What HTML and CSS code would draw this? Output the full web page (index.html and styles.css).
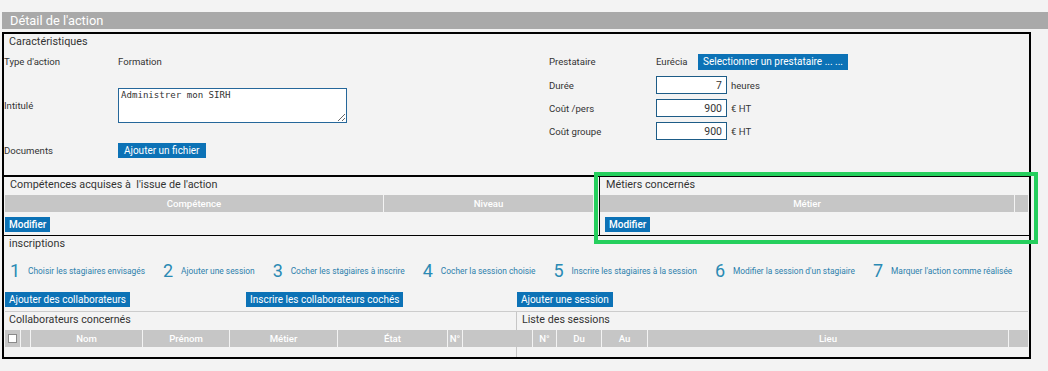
FILE: index.html
```html
<!DOCTYPE html>
<html lang="fr">
<head>
  <meta charset="UTF-8" />
  <title>Détail de l'action</title>
  <link rel="stylesheet" href="styles.css">
</head>
<body>

  <div class="page-title">Détail de l'action</div>

  <div class="detail">
    <section class="carac">
      <h2 class="section-title">Caractéristiques</h2>
      <div class="carac-body">
        <div class="carac-left">
          <div class="field field-type">
            <span class="label">Type d'action</span>
            <span class="value">Formation</span>
          </div>
          <div class="field field-title">
            <span class="label">Intitulé</span>
            <textarea class="title-input">Administrer mon SIRH</textarea>
          </div>
          <div class="field field-docs">
            <span class="label">Documents</span>
            <button class="btn btn-docs">Ajouter un fichier</button>
          </div>
        </div>
        <div class="carac-right">
          <div class="field field-provider">
            <span class="label label-right">Prestataire</span>
            <span class="value">Eurécia</span>
            <button class="btn btn-provider">Selectionner un prestataire ... ...</button>
          </div>
          <div class="field field-num">
            <span class="label label-right">Durée</span>
            <input class="num-input" type="text" value="7" />
            <span class="unit">heures</span>
          </div>
          <div class="field field-num">
            <span class="label label-right">Coût /pers</span>
            <input class="num-input" type="text" value="900" />
            <span class="unit">€ HT</span>
          </div>
          <div class="field field-num">
            <span class="label label-right">Coût groupe</span>
            <input class="num-input" type="text" value="900" />
            <span class="unit">€ HT</span>
          </div>
        </div>
      </div>
    </section>

    <div class="skills-row">
      <section class="skills">
        <h2 class="section-title">Compétences acquises à &nbsp;l'issue de l'action</h2>
        <div class="grid-head skills-head">
          <span>Compétence</span>
          <span>Niveau</span>
        </div>
        <button class="btn btn-edit">Modifier</button>
      </section>
      <section class="jobs">
        <h2 class="section-title">Métiers concernés</h2>
        <div class="grid-head jobs-head">
          <span>Métier</span>
          <span></span>
        </div>
        <button class="btn btn-edit btn-jobs">Modifier</button>
      </section>
    </div>

    <section class="inscriptions">
      <h2 class="section-title">inscriptions</h2>
      <ol class="steps">
        <li><span class="step-num">1</span><a href="#">Choisir les stagiaires envisagés</a></li>
        <li><span class="step-num">2</span><a href="#">Ajouter une session</a></li>
        <li><span class="step-num">3</span><a href="#">Cocher les stagiaires à inscrire</a></li>
        <li><span class="step-num">4</span><a href="#">Cocher la session choisie</a></li>
        <li><span class="step-num">5</span><a href="#">Inscrire les stagiaires à la session</a></li>
        <li><span class="step-num">6</span><a href="#">Modifier la session d'un stagiaire</a></li>
        <li><span class="step-num">7</span><a href="#">Marquer l'action comme réalisée</a></li>
      </ol>
      <div class="insc-actions">
        <div><button class="btn">Ajouter des collaborateurs</button></div>
        <div><button class="btn">Inscrire les collaborateurs cochés</button></div>
        <div><button class="btn">Ajouter une session</button></div>
      </div>
      <div class="lists">
        <div class="list list-people">
          <h3 class="list-title">Collaborateurs concernés</h3>
          <div class="grid-head people-head">
            <span class="check-cell"><input type="checkbox" /></span>
            <span></span>
            <span>Nom</span>
            <span>Prénom</span>
            <span>Métier</span>
            <span>État</span>
            <span>N°</span>
            <span></span>
          </div>
        </div>
        <div class="list list-sessions">
          <h3 class="list-title">Liste des sessions</h3>
          <div class="grid-head sessions-head">
            <span></span>
            <span>N°</span>
            <span>Du</span>
            <span>Au</span>
            <span>Lieu</span>
            <span></span>
          </div>
        </div>
      </div>
    </section>

    <div class="highlight"></div>
  </div>

</body>
</html>
```

FILE: styles.css
```css
* {
  box-sizing: border-box;
  margin: 0;
  padding: 0;
}

body {
  font-family: 'Roboto', 'Liberation Sans', sans-serif;
  background-color: #f3f3f3;
  color: #333;
  font-size: 9.6px;
  width: 1048px;
  height: 371px;
  overflow: hidden;
}

.page-title {
  margin: 12px 0 0 2px;
  height: 17px;
  line-height: 17px;
  padding-left: 8px;
  background-color: #a9a9a9;
  color: #fff;
  font-size: 12.8px;
}

.detail {
  position: relative;
  margin: 3px 0 0 2px;
  width: 1029px;
  border: 2px solid #000;
}

.section-title {
  font-size: 10.8px;
  font-weight: 400;
  line-height: 14px;
  padding-left: 5px;
  color: #333;
}

.btn {
  display: inline-block;
  height: 15px;
  line-height: 15px;
  padding: 0 4px;
  border: none;
  background-color: #0c72b6;
  color: #fff;
  font-family: inherit;
  font-size: 10px;
  cursor: pointer;
}

/* Caractéristiques */

.carac {
  height: 143px;
  border-bottom: 2px solid #000;
  padding-top: 1px;
}

.carac-body {
  display: flex;
  margin-top: 4px;
}

.carac-left {
  width: 545px;
}

.field {
  display: flex;
  align-items: center;
}

.label {
  width: 114px;
  flex-shrink: 0;
}

.label-right {
  width: 107px;
}

.field-type {
  height: 17px;
}

.field-title {
  margin-top: 18px;
}

.title-input {
  width: 229px;
  height: 35px;
  border: 1px solid #25679a;
  background: #fff;
  font-family: 'DejaVu Sans Mono', monospace;
  font-size: 9.1px;
  color: #333;
  padding: 1px 2px;
}

.btn-docs {
  padding: 0 6px;
}

.field-docs {
  margin-top: 20px;
  height: 15px;
}

.field-provider {
  height: 17px;
}

.field-provider .value {
  width: 42px;
}

.btn-provider {
  height: 16px;
  line-height: 16px;
  padding: 0 5px;
}

.field-num {
  margin-top: 6px;
  height: 18px;
}

.field-num + .field-num {
  margin-top: 5px;
}

.num-input {
  width: 71px;
  height: 18px;
  border: 1px solid #1d5c87;
  background: #fff;
  text-align: right;
  padding-right: 4px;
  font-family: inherit;
  font-size: 10.5px;
  color: #333;
}

.unit {
  margin-left: 4px;
}

/* Compétences / Métiers */

.skills-row {
  display: flex;
  border-bottom: 1px solid #000;
}

.skills {
  width: 596px;
  padding: 0 6px 3px 1px;
  border-right: 1px solid #000;
}

.jobs {
  flex: 1;
  padding: 0 1px 3px 0;
}

.skills .section-title,
.jobs .section-title {
  padding-left: 5px;
  padding-top: 1px;
}

.jobs .section-title {
  padding-left: 6px;
}

.grid-head {
  display: grid;
  height: 17px;
  margin-top: 3px;
  gap: 1px;
}

.grid-head span {
  background-color: #c6c6c6;
  color: #fff;
  font-weight: 500;
  text-align: center;
  line-height: 17px;
  font-size: 9.6px;
}

.skills-head {
  grid-template-columns: 378px 1fr;
}

.jobs-head {
  grid-template-columns: 1fr 13px;
}

.btn-edit {
  margin-top: 5px;
  font-weight: 500;
  padding: 0 4px;
}

.btn-jobs {
  margin-left: 5px;
}

/* Inscriptions */

.inscriptions {
  padding: 0 1px;
}

.inscriptions .section-title {
  padding-top: 1px;
  padding-left: 4px;
}

.steps {
  list-style: none;
  display: flex;
  gap: 18px;
  margin-top: 10px;
  padding-left: 5px;
  height: 20px;
  align-items: center;
}

.steps li {
  display: flex;
  align-items: center;
}

.step-num {
  width: 11px;
  margin-right: 7px;
  font-size: 18px;
  line-height: 20px;
  color: #2a8ab4;
}

.steps a {
  font-size: 8.4px;
  color: #2d7fac;
  text-decoration: none;
}

.insc-actions {
  display: grid;
  grid-template-columns: 241px 271px 1fr;
  margin-top: 11px;
}

.lists {
  display: flex;
  margin-top: 4px;
  border-top: 1px solid #ccc;
  height: 46px;
}

.list-people {
  width: 512px;
  border-right: 1px solid #c6c6c6;
}

.list-sessions {
  flex: 1;
}

.list-title {
  font-size: 10.7px;
  font-weight: 400;
  line-height: 13px;
  padding: 1px 0 0 4px;
}

.list-sessions .list-title {
  padding-left: 5px;
}

.people-head {
  margin-top: 4px;
  grid-template-columns: 15px 9px 111px 86px 107px 109px 14px 1fr;
}

.sessions-head {
  margin-top: 4px;
  grid-template-columns: 15px 23px 44px 45px 360px 1fr;
}

.check-cell {
  display: flex;
  align-items: center;
  justify-content: center;
}

.check-cell input {
  appearance: none;
  width: 9px;
  height: 9px;
  background: #fff;
  border: 1px solid #8a8a8a;
}

.highlight {
  position: absolute;
  left: 590px;
  top: 138px;
  width: 444px;
  height: 72px;
  border: 4px solid #25cf5d;
  pointer-events: none;
}
```
